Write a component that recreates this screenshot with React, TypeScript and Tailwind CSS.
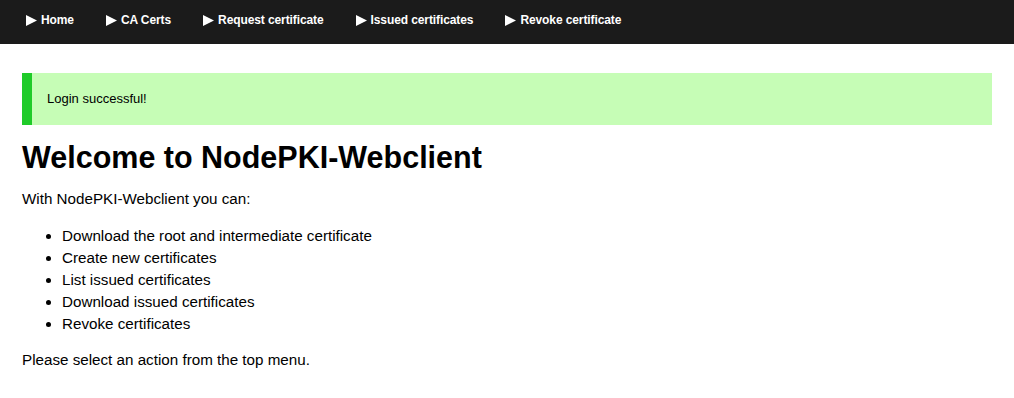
import React from 'react';

const menu = ["Home", "CA Certs", "Request certificate", "Issued certificates", "Revoke certificate"];

const features = [
    "Download the root and intermediate certificate",
    "Create new certificates",
    "List issued certificates",
    "Download issued certificates",
    "Revoke certificates",
];

function Arrow() {
    return (
        <svg width="11" height="11" viewBox="0 0 11 11" className="shrink-0">
            <polygon points="0,0 11,5.5 0,11" fill="#ffffff" />
        </svg>
    );
}

export default function App() {
    return (
        <div className="min-h-[398px] bg-white text-black font-['Liberation_Sans',Arial,sans-serif]">
            <nav className="h-[44px] bg-[#1b1b1b] flex items-start pt-[12px] pl-[10px]">
                {menu.map((item) => (
                    <a key={item} href="#" className="flex items-center gap-[4px] px-[16px] h-[16px] text-[12px] leading-[16px] font-bold text-white tracking-[-0.1px]">
                        <Arrow />
                        <span>{item}</span>
                    </a>
                ))}
            </nav>

            <main className="px-[22px] pt-[29px]">
                <div className="h-[52px] flex items-center bg-[#c6fdb6] border-l-[10px] border-[#1fcb29] pl-[15px] text-[13px]">
                    Login successful!
                </div>

                <h1 className="mt-[14px] text-[30.5px] leading-[36px] font-bold">Welcome to NodePKI-Webclient</h1>

                <p className="mt-[13px] text-[15.2px] leading-[22px]">With NodePKI-Webclient you can:</p>

                <ul className="mt-[15px] list-disc pl-[40px] text-[15.2px] leading-[22px]">
                    {features.map((f) => (
                        <li key={f}>{f}</li>
                    ))}
                </ul>

                <p className="mt-[14px] text-[15.2px] leading-[22px]">Please select an action from the top menu.</p>
            </main>
        </div>
    );
}
